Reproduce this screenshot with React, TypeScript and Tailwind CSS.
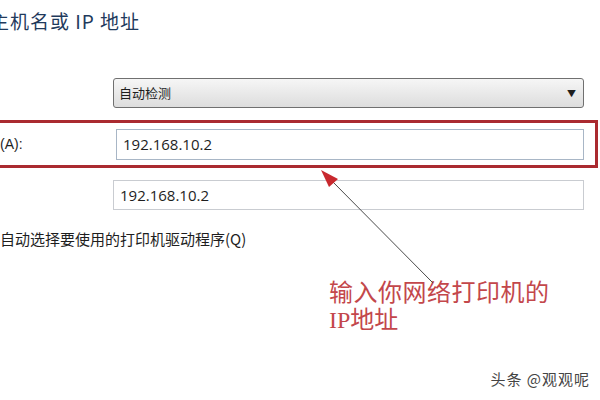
import React from 'react';

const cjk = { fontFamily: '"Noto Sans CJK SC", "Noto Sans", sans-serif' };

function ArrowMark() {
  return (
    <svg className="absolute left-0 top-0" width="600" height="400" viewBox="0 0 600 400">
      <line x1="433" y1="283" x2="330" y2="179" stroke="#4a4a4a" strokeWidth="1" />
      <polygon points="321,170 338,179 329,187" fill="#c8282e" />
    </svg>
  );
}

export default function App() {
  return (
    <div className="relative w-[600px] h-[400px] overflow-hidden bg-white text-[#1e1e1e]" style={cjk}>
      <h1 className="-ml-[10px] pt-[8px] text-[19px] leading-[25px] text-[#1f3a5c] tracking-[1px] whitespace-nowrap">
        主机名或 IP 地址
      </h1>

      <div className="mt-[45px] pl-[113px] pr-[16px]">
        <div className="flex h-[30px] items-center justify-between rounded-[3px] border border-[#707070] bg-gradient-to-b from-[#f6f6f6] to-[#dddddd] pl-[5px] pr-[7px] text-[13px]">
          <span>自动检测</span>
          <span className="text-[9px] leading-none">▼</span>
        </div>
      </div>

      <div className="-ml-[3px] mr-[2px] mt-[12px] flex h-[48px] items-center border-[3px] border-[#aa2a30]">
        <span className="w-[116px] text-[14px]" style={{ fontFamily: '"Liberation Sans", "Noto Sans CJK SC", sans-serif' }}>
          (A):
        </span>
        <div className="mr-[11px] flex h-[31px] flex-1 items-center border border-[#a8b6c6] bg-white pl-[6px] text-[15px]" style={{ fontFamily: '"Open Sans", sans-serif' }}>
          192.168.10.2
        </div>
      </div>

      <div className="mt-[12px] pl-[113px] pr-[16px]">
        <div className="flex h-[30px] items-center border border-[#c9ccd1] bg-white pl-[6px] text-[15px]" style={{ fontFamily: '"Open Sans", sans-serif' }}>
          192.168.10.2
        </div>
      </div>

      <p className="mt-[19px] text-[15px] leading-[20px]">自动选择要使用的打印机驱动程序(Q)</p>

      <div className="ml-[329px] mt-[28px] text-[24px] leading-[27px] text-[#c3474b]" style={{ fontFamily: '"Noto Sans CJK SC", sans-serif' }}>
        <div className="tracking-[0.5px]">输入你网络打印机的</div>
        <div>
          <span style={{ fontFamily: '"Liberation Serif", serif' }}>IP</span>地址
        </div>
      </div>

      <ArrowMark />

      <div className="absolute right-[10px] bottom-[10px] text-[15px] tracking-[1px] text-[#444]">头条 @观观呢</div>
    </div>
  );
}
